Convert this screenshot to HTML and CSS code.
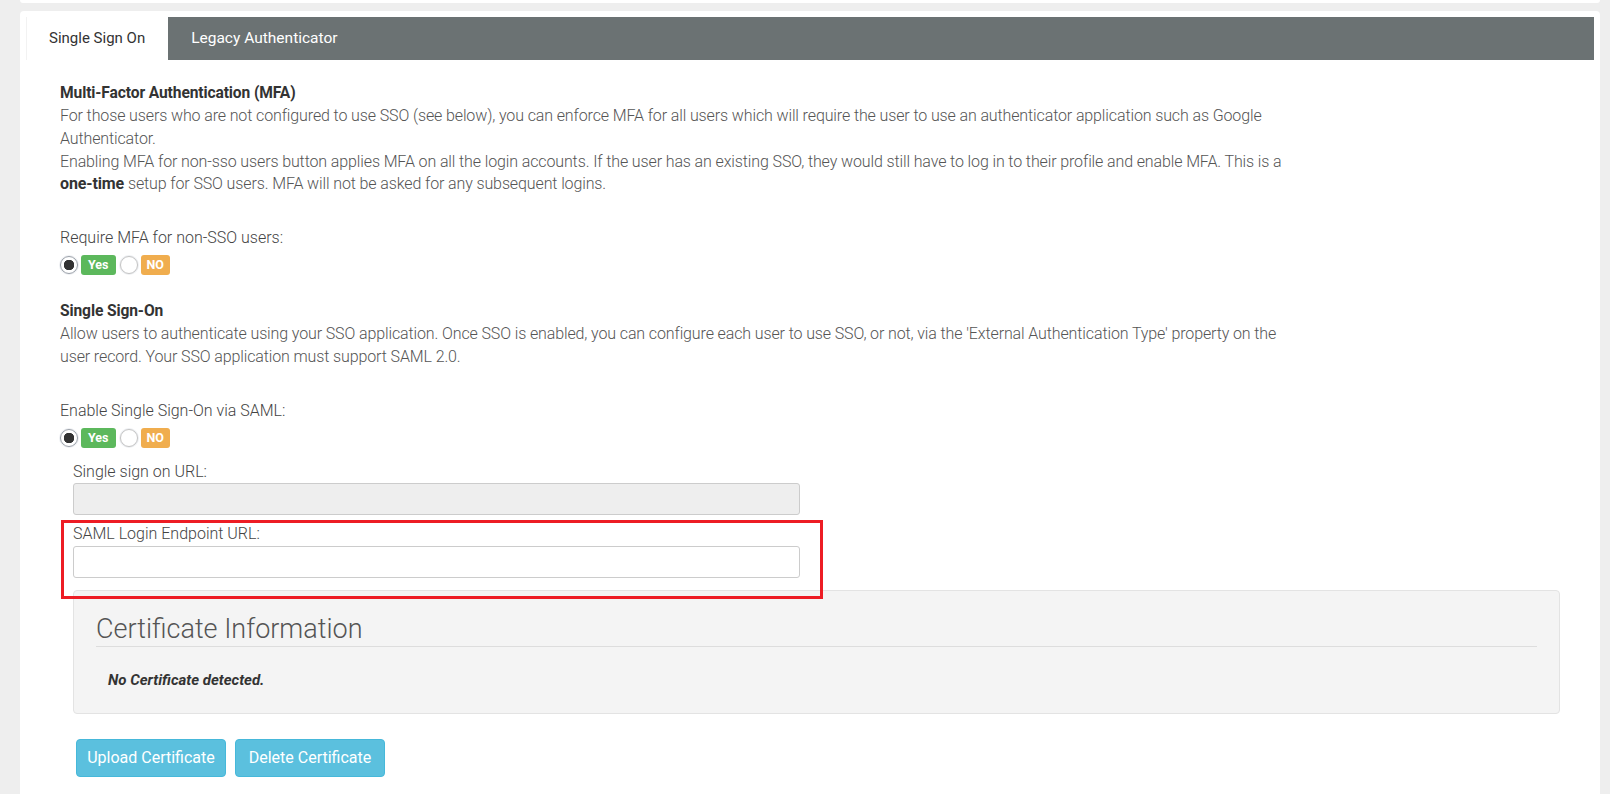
FILE: index.html
```html
<!DOCTYPE html>
<html lang="en">
<head>
    <meta charset="UTF-8" />
    <title>Authentication Settings</title>
    <link rel="stylesheet" href="styles.css">
</head>
<body>
<div class="strip"></div>
<div class="card">
    <ul class="tabs">
        <li class="tab active">Single Sign On</li>
        <li class="tab">Legacy Authenticator</li>
    </ul>
    <div class="pane">
        <section class="intro">
            <h4>Multi-Factor Authentication (MFA)</h4>
            <p>For those users who are not configured to use SSO (see below), you can enforce MFA for all users which will require the user to use an authenticator application such as Google Authenticator.<br>Enabling MFA for non-sso users button applies MFA on all the login accounts. If the user has an existing SSO, they would still have to log in to their profile and enable MFA. This is a <b>one-time</b> setup for SSO users. MFA will not be asked for any subsequent logins.</p>
        </section>

        <div class="choice choice-mfa">
            <label>Require MFA for non-SSO users:</label>
            <div class="radios">
                <input type="radio" name="mfa" checked><span class="badge yes">Yes</span>
                <input type="radio" name="mfa"><span class="badge no">NO</span>
            </div>
        </div>

        <section class="intro intro-sso">
            <h4>Single Sign-On</h4>
            <p>Allow users to authenticate using your SSO application. Once SSO is enabled, you can configure each user to use SSO, or not, via the 'External Authentication Type' property on the user record. Your SSO application must support SAML 2.0.</p>
        </section>

        <div class="choice choice-sso">
            <label>Enable Single Sign-On via SAML:</label>
            <div class="radios">
                <input type="radio" name="sso" checked><span class="badge yes">Yes</span>
                <input type="radio" name="sso"><span class="badge no">NO</span>
            </div>
        </div>

        <div class="fields">
            <div class="field">
                <label>Single sign on URL:</label>
                <input type="text" disabled>
            </div>
            <div class="field field-marked">
                <label>SAML Login Endpoint URL:</label>
                <input type="text">
            </div>

            <div class="cert-panel">
                <h3>Certificate Information</h3>
                <p class="cert-empty">No Certificate detected.</p>
            </div>

            <div class="actions">
                <button class="btn">Upload Certificate</button>
                <button class="btn">Delete Certificate</button>
            </div>
        </div>
    </div>
</div>
</body>
</html>
```

FILE: styles.css
```css
:root {
    --page-bg: #eeeeee;
    --tab-bg: #6b7273;
    --text: #555555;
    --heading: #333333;
    --border: #cccccc;
    --info: #5bc0de;
    --radius: 4px;
}
* { margin: 0; padding: 0; box-sizing: border-box; }
body {
    font-family: Roboto, "Liberation Sans", sans-serif;
    font-size: 16px;
    line-height: 1.42857;
    color: var(--text);
    background: var(--page-bg);
    overflow: hidden;
}
.strip {
    height: 3px;
    margin: 0 10px 8px 20px;
    background: #fff;
    border-radius: 0 0 var(--radius) var(--radius);
}
.card {
    margin: 0 10px 0 20px;
    padding: 6px 6px 60px;
    background: #fff;
    border-radius: var(--radius);
}
.tabs {
    display: flex;
    list-style: none;
    height: 43px;
    background: var(--tab-bg);
}
.tab {
    padding: 0 23px;
    line-height: 43px;
    font-size: 15.5px;
    color: #fff;
}
.tab.active {
    background: #fff;
    color: var(--heading);
    border-left: 1px solid #f2f2f2;
    padding-left: 22px;
    font-size: 15px;
}
.pane {
    padding: 22px 34px 0 34px;
}
.intro {
    max-width: 1232px;
    letter-spacing: -0.12px;
}
.intro h4 {
    font-size: 15.6px;
    font-weight: 700;
    line-height: 22.857px;
    color: var(--heading);
}
.intro p {
    font-weight: 300;
    line-height: 22.857px;
}
.intro p b {
    font-weight: 700;
    color: var(--heading);
}
.intro-sso {
    margin-top: 25px;
}
.choice {
    margin-top: 31px;
}
.choice-sso {
    margin-top: 31px;
}
.choice label {
    display: block;
    font-weight: 300;
    color: #444;
}
.radios {
    display: flex;
    align-items: center;
    height: 20px;
    margin-top: 5px;
}
.radios input {
    appearance: none;
    width: 18px;
    height: 18px;
    margin-right: 3px;
    border: 1px solid #c4c4c4;
    border-radius: 50%;
    background: #fff;
    box-shadow: 0 0 0 1px #eef0f3;
}
.radios input:checked {
    border-color: #9aa0a8;
    background: radial-gradient(circle, #333 0, #333 5px, #fff 5.5px);
}
.badge {
    height: 20px;
    margin-right: 4px;
    padding: 0 7px;
    border-radius: 3px;
    font-size: 12.5px;
    font-weight: 700;
    line-height: 20px;
    color: #fff;
}
.badge.yes { background: #5cb85c; }
.badge.no { background: #f0ad4e; padding: 0 6px; }

.fields {
    margin: 13px 0 0 13px;
}
.field {
    width: 727px;
}
.field + .field {
    margin-top: 8px;
}
.field label {
    display: block;
    font-weight: 300;
    color: #444;
}
.field input {
    display: block;
    width: 100%;
    height: 32px;
    padding: 0 10px;
    border: 1px solid var(--border);
    border-radius: 3px;
    background: #fff;
    font: inherit;
}
.field input:disabled {
    background: #eeeeee;
}
.field-marked {
    position: relative;
}
.field-marked::after {
    content: "";
    position: absolute;
    top: -3px;
    left: -12px;
    right: -23px;
    bottom: -21px;
    border: 3px solid #ed1c24;
    z-index: 2;
}
.cert-panel {
    position: relative;
    margin-top: 12px;
    padding: 24px 22px 22px;
    background: #f4f4f4;
    border: 1px solid #e3e3e3;
    border-radius: var(--radius);
}
.cert-panel h3 {
    font-size: 27px;
    font-weight: 300;
    line-height: 1.1;
    color: #555;
    padding-bottom: 1px;
    border-bottom: 1px solid #dddddd;
}
.cert-empty {
    margin-top: 23px;
    padding-left: 12px;
    font-size: 15px;
    line-height: 21px;
    font-weight: 700;
    font-style: italic;
    color: var(--heading);
}
.actions {
    display: flex;
    gap: 9px;
    margin: 25px 0 0 3px;
}
.btn {
    width: 150px;
    height: 38px;
    padding: 0;
    font: inherit;
    font-size: 16px;
    color: #fff;
    background: var(--info);
    border: 1px solid #46b8da;
    border-radius: var(--radius);
    cursor: pointer;
}
```
